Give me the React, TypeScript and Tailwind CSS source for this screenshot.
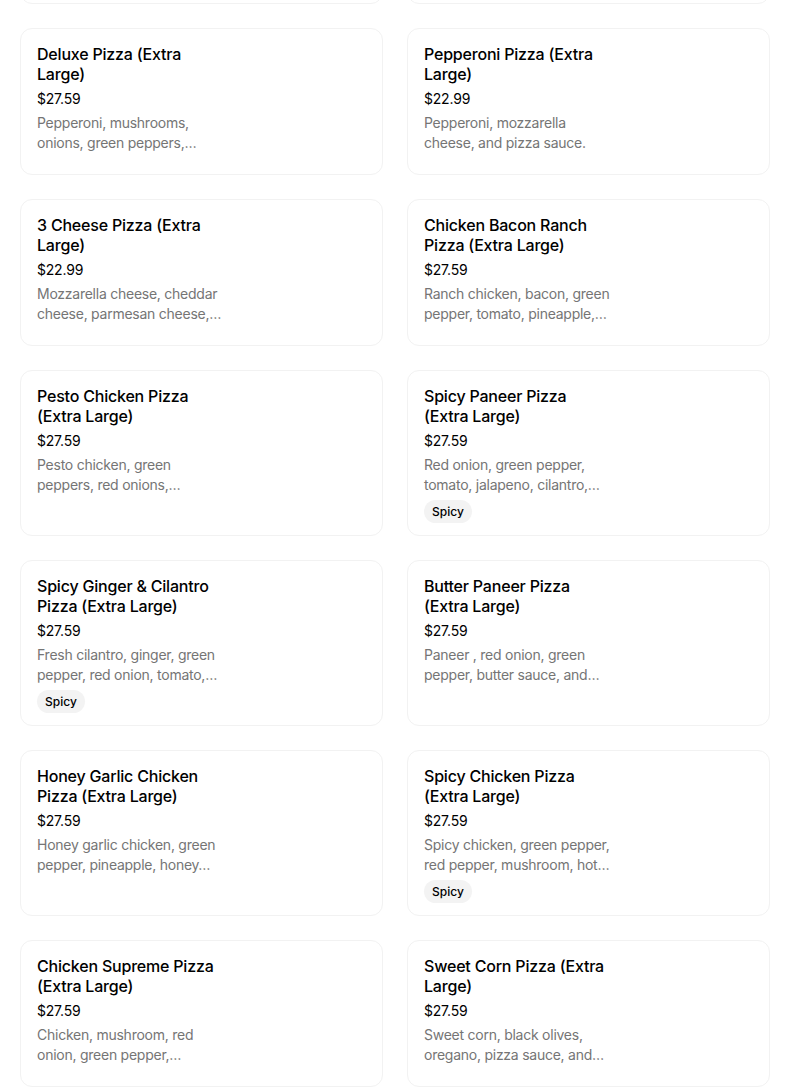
import React from "react";

type Item = {
  title: string[];
  price: string;
  desc: string[];
  spicy?: boolean;
};

const rows: [Item, Item][] = [
  [
    { title: ["Deluxe Pizza (Extra", "Large)"], price: "$27.59", desc: ["Pepperoni, mushrooms,", "onions, green peppers,…"] },
    { title: ["Pepperoni Pizza (Extra", "Large)"], price: "$22.99", desc: ["Pepperoni, mozzarella", "cheese, and pizza sauce."] },
  ],
  [
    { title: ["3 Cheese Pizza (Extra", "Large)"], price: "$22.99", desc: ["Mozzarella cheese, cheddar", "cheese, parmesan cheese,…"] },
    { title: ["Chicken Bacon Ranch", "Pizza (Extra Large)"], price: "$27.59", desc: ["Ranch chicken, bacon, green", "pepper, tomato, pineapple,…"] },
  ],
  [
    { title: ["Pesto Chicken Pizza", "(Extra Large)"], price: "$27.59", desc: ["Pesto chicken, green", "peppers, red onions,…"] },
    { title: ["Spicy Paneer Pizza", "(Extra Large)"], price: "$27.59", desc: ["Red onion, green pepper,", "tomato, jalapeno, cilantro,…"], spicy: true },
  ],
  [
    { title: ["Spicy Ginger & Cilantro", "Pizza (Extra Large)"], price: "$27.59", desc: ["Fresh cilantro, ginger, green", "pepper, red onion, tomato,…"], spicy: true },
    { title: ["Butter Paneer Pizza", "(Extra Large)"], price: "$27.59", desc: ["Paneer , red onion, green", "pepper, butter sauce, and…"] },
  ],
  [
    { title: ["Honey Garlic Chicken", "Pizza (Extra Large)"], price: "$27.59", desc: ["Honey garlic chicken, green", "pepper, pineapple, honey…"] },
    { title: ["Spicy Chicken Pizza", "(Extra Large)"], price: "$27.59", desc: ["Spicy chicken, green pepper,", "red pepper, mushroom, hot…"], spicy: true },
  ],
  [
    { title: ["Chicken Supreme Pizza", "(Extra Large)"], price: "$27.59", desc: ["Chicken, mushroom, red", "onion, green pepper,…"] },
    { title: ["Sweet Corn Pizza (Extra", "Large)"], price: "$27.59", desc: ["Sweet corn, black olives,", "oregano, pizza sauce, and…"] },
  ],
];

function MenuCard({ item }: { item: Item }) {
  return (
    <div className="min-h-[147px] rounded-xl border border-[#f2f2f2] bg-white px-4 pt-[15px] pb-3">
      <div className="w-[190px]">
        <div className="text-base font-medium leading-5 tracking-[-0.2px] text-black">
          {item.title.map((line) => (
            <div key={line} className="whitespace-nowrap">{line}</div>
          ))}
        </div>
        <div className="mt-[5px] text-sm leading-5 tracking-[-0.2px] text-black">{item.price}</div>
        <div className="mt-1 text-sm leading-5 tracking-[-0.25px] text-[#757575]">
          {item.desc.map((line) => (
            <div key={line} className="whitespace-nowrap">{line}</div>
          ))}
        </div>
        {item.spicy && (
          <div className="mt-[5px] inline-flex h-[23px] items-center rounded-full bg-[#f3f3f3] px-2 text-xs font-medium text-black">
            Spicy
          </div>
        )}
      </div>
    </div>
  );
}

export default function App() {
  return (
    <div
      className="min-h-screen overflow-hidden bg-white"
      style={{ fontFamily: "Inter, 'Noto Sans', sans-serif" }}
    >
      <div className="ml-5 -mt-[143px] grid w-[750px] grid-cols-2 gap-6">
        {/* previous row, scrolled almost out of view */}
        <div className="h-[147px] rounded-xl border border-[#f2f2f2] bg-white" />
        <div className="h-[147px] rounded-xl border border-[#f2f2f2] bg-white" />
        {rows.map(([a, b], i) => (
          <React.Fragment key={i}>
            <MenuCard item={a} />
            <MenuCard item={b} />
          </React.Fragment>
        ))}
      </div>
    </div>
  );
}
